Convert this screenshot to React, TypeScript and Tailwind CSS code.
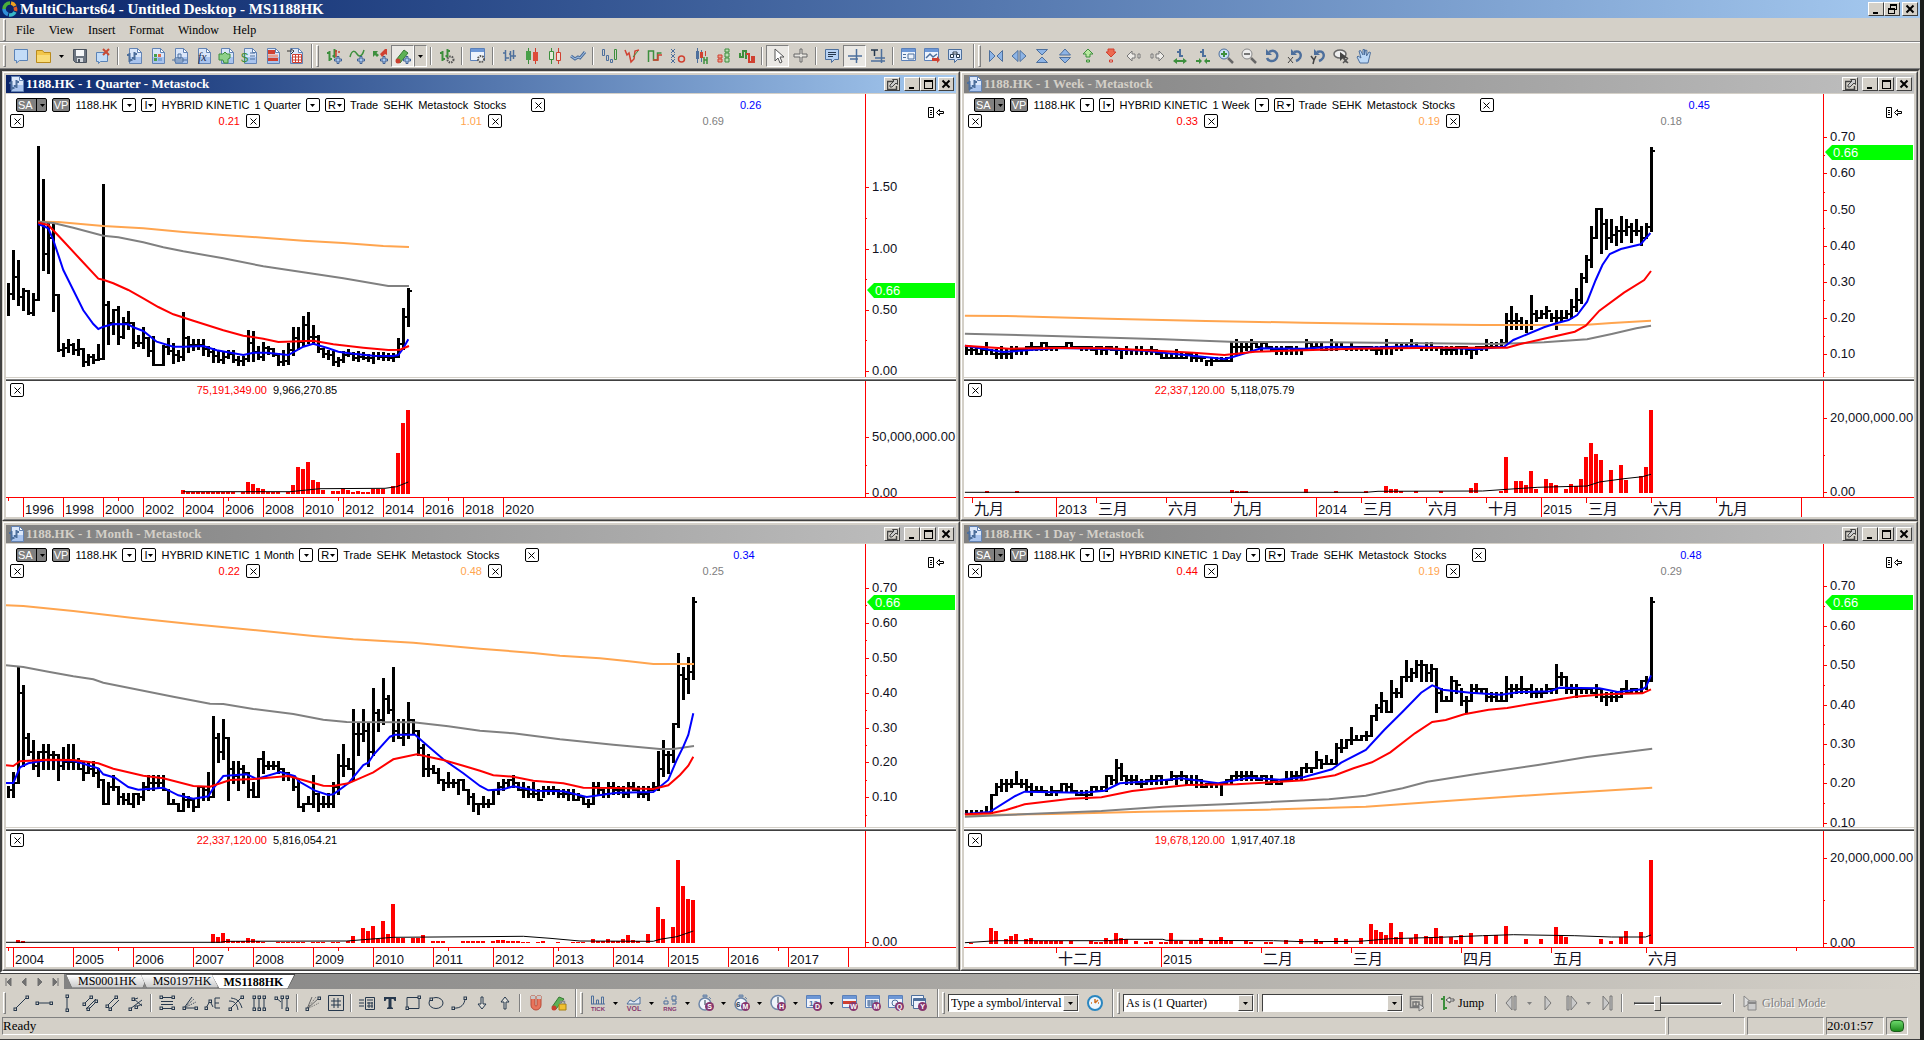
import React from "react";

type Pair = [number, number];
type Bar = [number, number, number];

const B = "#4d6f9c";
const G = "#3d8f3d";
const R = "#d04030";
const D = "#26384d";
const P = "#86366e";

function line(d: string, color: string, width = 1) {
  return <path d={d} fill="none" stroke={color} strokeWidth={width} />;
}

function plus(x = 8, y = 8) {
  return (
    <path
      transform={`translate(${x} ${y})`}
      d="M3 .5h2v2.500h2.500v2H5v2.500H3V5H.5V3H3z"
      fill="#a9c8ee"
      stroke="#3e5f92"
    />
  );
}

function page(extra: React.ReactNode) {
  return (
    <>
      <path d="M3.500.5h8l4 4v11h-12z" fill="#dbe7fa" stroke="#6283b4" />
      <path d="M4 9h11v6H4z" fill="#a9c4ee" />
      <path d="M11.500.5v4h4z" fill="#fff" stroke="#6283b4" />
      {extra}
    </>
  );
}

function badge(letter: string) {
  return (
    <>
      <circle cx="11.500" cy="11.500" r="4.500" fill={P} />
      <text x="11.500" y="14" fontSize="7" fontWeight="bold" textAnchor="middle" fill="#fff">
        {letter}
      </text>
    </>
  );
}

function calendar(extra: React.ReactNode) {
  return (
    <>
      <path d="M.5.5h14v12H.5z" fill="#eef3fc" stroke="#5b80b8" />
      <path d="M1 1h13v3H1z" fill="#6d97d6" />
      {extra}
    </>
  );
}

function watch(extra: React.ReactNode) {
  return (
    <>
      <path d="M5 0h4v2H5zM11 2l2 2" fill="#8aa0bd" stroke="#6d86a8" />
      <circle cx="7" cy="9" r="6" fill="#f2f6fc" stroke="#6d86a8" strokeWidth="1.500" />
      {extra}
    </>
  );
}

function hollow(points: string, color = D) {
  return points.split(" ").map((p) => {
    const [x, y] = p.split(",").map(Number);
    return <rect key={p} x={x - 1} y={y - 1} width="2.500" height="2.500" fill="#d4d0c8" stroke={color} />;
  });
}

const barIcon = "M3.500 3v10M1 5h2M4 11h2M8.500 1v9M6.500 8h2M9 3h2";

const icons: Record<string, React.ReactNode> = {
  "New Workspace": <path d="M1.500 1.500h13v11h-8l-3 2.500v-2.500h-2z" fill="#c3dcf7" stroke="#5a82b6" />,
  "Open": (
    <>
      <path d="M.5 2.500h6l1.500 2h6.500v10H.5z" fill="#f2c64a" stroke="#b98a1c" />
      <path d="M1 7h13v7H1z" fill="#f9dc78" />
    </>
  ),
  "Save": (
    <>
      <path d="M1.500 1.500h13v13h-11l-2-2z" fill="#6c7480" stroke="#4a525e" />
      <path d="M4 2h8v6H4z" fill="#f5f6f8" />
      <path d="M5 10h6v4H5z" fill="#d5d9de" />
      <path d="M6 11h2v3H6z" fill="#4a525e" />
    </>
  ),
  "Close Workspace": (
    <>
      <path d="M1.500 4.500h11v9h-7l-2 2v-2h-2z" fill="#c3dcf7" stroke="#5a82b6" />
      {line("M8 1l6 6M14 1L8 7", "#c94a34", 2)}
    </>
  ),
  "Insert Chart": page(line("M3.500 5v9M1 7h2M4 12h2.500M8.500 4v8M6 10h2M9 6h2", B, 2)),
  "Insert Scanner": page(
    <>
      <path d="M5 6h3v3H5zM5 10h3v3H5z" fill="#4aa04a" />
      <path d="M9 6h3v3H9z" fill="#e06a4a" />
      <path d="M9 10h4v3H9z" fill="#7ea4d8" />
    </>
  ),
  "Insert Bar": page(
    <>
      <path d="M3 10h8v4H3zM6 6h3v4H6z" fill="#c9dcf6" stroke={B} />
      {line("M0 12h15", B)}
    </>
  ),
  "Insert Formula": page(
    <text x="3" y="13" fontSize="12" fontStyle="italic" fill="#1f3050" fontFamily="Liberation Serif">
      fx
    </text>
  ),
  "Insert Signal": page(<path d="M1 6h4l2-2 2 2h3v4l-2 1v4H6l-1-3H1z" fill="#8fd08a" stroke={G} />),
  "Insert Portfolio": page(
    <>
      {line("M9 5h5M9 8h5M9 11h5", B)}
      <text x="0" y="14" fontSize="13" fill={G}>$</text>
    </>
  ),
  "Order Tracker": page(
    <>
      <path d="M4 2h7v4H4zM4 10h10v3H4z" fill={R} />
      <path d="M4 6.500h10v3H4z" fill="#e8a090" />
    </>
  ),
  "Insert Table": page(
    <>
      <path d="M5.500 6.500h9v8h-9z" fill="#fff" stroke={R} />
      {line("M5 9h9M5 12h9M8.500 6v8M11.500 6v8", R)}
      {line("M0 3h5M4 1l3 2-3 3", "#333")}
    </>
  ),
  "Add Instrument": <>{line(barIcon, G, 2)}{line("M10 2v7M12 4h2", R, 1.5)}{plus()}</>,
  "Add Study": <>{line("M1 9C3 1 6 3 8 6s5 3 7-4", G, 1.5)}{plus()}</>,
  "Add Strategy": (
    <>
      <path d="M1 9V3h5L4.500 5 7 7 5 9 3 7z" fill={G} />
      <path d="M8 6l5-5h2v6l-2-1-3 3z" fill={R} />
      {plus()}
    </>
  ),
  "Add Drawing": (
    <>
      <path d="M1 12L9 2l4 3-8 10z" fill="#5db155" stroke="#377a33" />
      <circle cx="3" cy="13" r="2.500" fill="#c9402f" />
      {plus(8, 8)}
    </>
  ),
  "Format Objects": (
    <>
      {line(barIcon, G, 2)}
      <circle cx="11.500" cy="11.500" r="3" fill="#d4d0c8" stroke="#555" strokeWidth="2" strokeDasharray="1.500 1" />
    </>
  ),
  "Format Window": (
    <>
      {calendar(null)}
      <circle cx="11" cy="11" r="3" fill="#eee" stroke="#555" strokeWidth="2" strokeDasharray="1.500 1" />
    </>
  ),
  "Bar": <>{line("M4.500 2v11M2 5h2M5 10h3M9.500 3v10M8 6h2M12.500 2v9M10 8h5", B, 1.5)}</>,
  "Candle": (
    <>
      {line("M4.500 0v16", G)}
      {line("M11.500 0v16", R)}
      <path d="M2 3h5v9H2z" fill="#49a049" />
      <path d="M9 4h5v9H9z" fill="#dd4c38" />
    </>
  ),
  "Hollow Candle": (
    <>
      {line("M4.500 0v16", G)}
      {line("M11.500 0v16", R)}
      <path d="M2.500 3.500h4v8h-4z" fill="#e5ead8" stroke={G} />
      <path d="M9.500 4.500h4v8h-4z" fill="#f0ded8" stroke={R} />
    </>
  ),
  "Line": <>{line("M1 8l4 3 3-2 2 1 5-6", B, 3)}{line("M1 8l4 3 3-2 2 1 5-6", "#aac6ea")}</>,
  "HLC": (
    <>
      <path d="M1.500 1.500h2v6h-2zM5.500 7.500h2v5h-2z" fill="#d4d0c8" stroke={B} />
      <path d="M9.500 11.500h2v3h-2z" fill="#d4d0c8" stroke={B} />
      <path d="M13.500 1.500h2v10h-2z" fill="#d4d0c8" stroke={G} />
    </>
  ),
  "Kagi": <>{line("M1 2l2 5 2-2 2 9 3-3 1-8 4-1", R, 1.5)}{line("M9 9l5-6", G)}</>,
  "Renko": <>{line("M1.500 14V3h5v9h4V5h4", G, 1.5)}{line("M6 12h5V7h4", R, 1.5)}</>,
  "Point and Figure": (
    <>
      {line("M1 1l4 4M5 1L1 5M1 6l4 4M5 6l-4 4M1 11l4 4M5 11l-4 4", B)}
      <circle cx="11.500" cy="11" r="3" fill="none" stroke={R} strokeWidth="1.500" />
    </>
  ),
  "Heikin Ashi": (
    <>
      {line("M4.500 0v15M8.500 2v12", B)}
      <path d="M3 3h3v8H3z" fill={B} />
      <path d="M7 4h3v6H7z" fill={R} />
      {line("M12.500 3v5", R)}
      {line("M11 9v7M14 9v7M11 12h3", G, 1.5)}
    </>
  ),
  "Line Break": (
    <>
      <path d="M2 7h4v3H2zM2 11h4v3H2z" fill="#e8a090" stroke={R} />
      <path d="M9 1h4v3H9zM9 5h4v4H9zM9 10h4v4H9z" fill="#bcdcb4" stroke={G} />
    </>
  ),
  "Volume Profile": <>{line("M1 5v4h3V3h3v8", G, 2)}{line("M7 6h3v8h3V9h2v6", R, 2)}</>,
  "Pointer": <path d="M5 1v12l3-3 2 5 2-1-2-5h4z" fill="#fff" stroke="#555" />,
  "Cross Cursor": <path d="M7 1h2v5h5v3H9v5H7V9H1V6h6z" fill="#e6e4df" stroke="#666" />,
  "Hint Window": <><path d="M1.500 1.500h13v10h-4l-3 3v-3h-6z" fill="#b7d2f4" stroke={B} />{line("M4 4.500h8M4 6.500h8M4 8.500h5", D)}</>,
  "Status Line": <>{line("M9.500 1v14M1 8h14M3 11h8", B, 1.5)}</>,
  "Text Status": (
    <>
      {line("M11.500 1v14M5 10h10M1 13h14", B, 1.5)}
      {line("M1 2h7M4.500 2v6", D, 1.5)}
    </>
  ),
  "Data Window": <>{calendar(line("M2 6.500h3M2 9.500h3M7 6h6v5H7z", B))}</>,
  "Chart Trading": <>{calendar(line("M2 10l4-4 3 3 4-3", B, 1.5))}<path d="M8 10h5v-2l3 4-3 3v-2H8z" fill={R} /></>,
  "Look Inside": <><path d="M1.500 1.500h13v10h-4l-3 3v-3h-6z" fill="#cfe0f7" stroke={B} /><path d="M3.500 6.500h3v3h-3zM9.500 6.500h3v3h-3zM6 4h4v2H6z" fill="#fff" stroke={D} /></>,
  "Compress Width": <><path d="M1.500 2.500v11L7 8z" fill="#8db4e6" stroke={B} /><path d="M14.500 2.500v11L9 8z" fill="#8db4e6" stroke={B} /></>,
  "Expand Width": <><path d="M7 2.500v11L1 8zM9 2.500v11L15 8z" fill="#8db4e6" stroke={B} /></>,
  "Compress Height": <><path d="M2.500 1.500h11L8 7zM2.500 14.500h11L8 9z" fill="#8db4e6" stroke={B} /></>,
  "Expand Height": <><path d="M2.500 7h11L8 1zM2.500 9.500h11L8 15z" fill="#8db4e6" stroke={B} /></>,
  "Shift Up": <><path d="M8 1l5 5h-3v3H6V6H3z" fill="#b9e8a0" stroke={G} /><path d="M6.500 12h3v2h-3z" fill="#b9e8a0" stroke={G} /></>,
  "Shift Down": <><path d="M8 9L3 4h2V1h6v3h2z" fill="#ec6a50" stroke={R} /><path d="M6.500 12h3v2h-3z" fill="#ecc" stroke={R} /></>,
  "Shift Left": <><path d="M1 8l5-5v3h3v4H6v3zM12 6h2v4h-2z" fill="#eeece8" stroke="#777" /></>,
  "Shift Right": <><path d="M15 8l-5-5v3H7v4h3v3zM2 6h2v4H2z" fill="#eeece8" stroke="#777" /></>,
  "More Bars": <>{line("M8 1v8M5 4h3M8 8h3", B, 2)}<path d="M1 13l4-3v2h6v-2l4 3-4 3v-2H5v2z" fill={G} /></>,
  "Fewer Bars": <>{line("M8 1v8M5 4h3M8 8h3", B, 2)}<path d="M7 13l-3-3v2H1v2h3v2zM9 13l3-3v2h3v2h-3v2z" fill={G} /></>,
  "Zoom In": <><circle cx="6" cy="6" r="5" fill="#c9dff7" stroke={B} />{line("M3 6h6M6 3v6", G, 2)}{line("M10 10l5 5", "#666", 2.5)}</>,
  "Zoom Out": <><circle cx="6" cy="6" r="5" fill="#eee" stroke="#888" />{line("M3 6h6", "#777", 2)}{line("M10 10l5 5", "#666", 2.5)}</>,
  "Undo Zoom": <>{line("M5 4c7-4 11 4 6 8-3 2-7 1-8-2", B, 2.5)}<path d="M2 1v6h6z" fill={B} /></>,
  "Reset X": <>{line("M7 4c7-3 10 6 2 9", B, 2.5)}<path d="M4 1v6h6z" fill={B} />{line("M1 9l5 6M6 9l-5 6", "#444")}</>,
  "Reset Y": <>{line("M7 4c7-3 10 6 2 9", B, 2.5)}<path d="M4 1v6h6z" fill={B} />{line("M1 8l3 4 2-4M4 12l-1 4", "#444", 1.5)}</>,
  "Cancel Zoom": <><ellipse cx="7" cy="6" rx="6" ry="4" fill="#eee" stroke="#666" strokeWidth="1.500" /><path d="M7 4v9l3-3 3 5 1-1-2-4h3z" fill="#444" />{line("M10 10l5 5M15 10l-5 5", "#555", 1.5)}</>,
  "Hand": <path d="M4 15L1 9l1-1 3 2L3 3l1.500-.5L7 7V1.500h1.500V7l1-5L11 2.500 10.500 8 13 4l1.500.5L12 15z" fill="#bcd8f6" stroke={B} />,
  "Trend Line": <>{line("M2 14L14 2", D)}{hollow("2,14 14,2")}</>,
  "Horizontal Line": <>{line("M1 8h14", D)}{hollow("1,8 15,8")}</>,
  "Vertical Line": <>{line("M8 1v14", D)}{hollow("8,1 8,15")}</>,
  "Regression": <>{line("M1 10l8-8M4 14L14 4M6 15l9-9", D)}{hollow("2,9 9,2 6,14 14,6")}</>,
  "Equidistant": <>{line("M2 11L11 2M5 14l9-9", D)}{hollow("2,11 11,2 5,14")}</>,
  "Pitchfork": <>{line("M2 14L14 5M5 3l9 8M4 5l6-2M8 12l6-3", D)}{hollow("5,4 8,12 2,14")}</>,
  "Fibonacci Levels": <>{line("M2 2.500h12M2 6.500h12M2 9.500h12M2 13.500h12", D)}{hollow("2,2 14,2 2,13 14,13")}</>,
  "Speed Lines": <>{line("M2 13h12M2 13L10 2", D)}<path d="M2 13l12-6M2 13l10-9" fill="none" stroke={D} strokeDasharray="1 1" />{hollow("2,13 14,13")}</>,
  "Elliott": <>{line("M1 13l4-7 3 6M10 3h5M10 3v10h5M10 8h4", D)}{hollow("5,6 1,13")}</>,
  "Arcs": <>{line("M2 14L14 2M1 6c6 0 8 3 9 9M3 3c7 1 9 4 11 10", D)}{hollow("2,14 14,2")}</>,
  "Time Zones": <>{line("M3 2v12M8 2v12M13 2v12", D)}{hollow("3,2 3,14 8,2 8,14 13,2 13,14")}</>,
  "Trend Time": <>{line("M1 2l6 5M8 2v12M13 2v12", D)}{hollow("2,3 8,2 13,2 13,14")}</>,
  "Gann Fan": <>{line("M2 14L14 3M2 14L7 2", "#666")}<path d="M2 14L11 2M2 14l12-6" fill="none" stroke="#666" strokeDasharray="1 1" />{hollow("2,14 14,3")}</>,
  "Gann Square": <>{line("M.5.500h15v15h-15zM6 3v10M10 3v10M3 6h10M3 10h10", D)}</>,
  "Label": <>{line("M6.500 2.500h9v12h-9zM8 5h6M8 8h6M8 11h6M10 7v6M13 7v6M0 5h5M0 8h5M0 11h5", D)}</>,
  "Text": <path d="M2 2h12v4h-1.500l-1-2H9.500v8l1.500 1v1H5v-1l1.500-1V4h-2l-1 2H2z" fill={D} />,
  "Rectangle": <>{line("M2 2.500h12v11H2z", D)}{hollow("14,2 2,13")}</>,
  "Ellipse": <><ellipse cx="8" cy="8" rx="7" ry="5.500" fill="none" stroke={D} />{hollow("3,4")}</>,
  "Arc": <>{line("M2 13c8 1 12-4 12-10", D)}{hollow("2,13 14,3")}</>,
  "Arrow Down": <path d="M7 2h2v7h3l-4 5-4-5h3z" fill="#e2e0da" stroke={D} />,
  "Arrow Up": <path d="M7 14h2V7h3L8 2 4 7h3z" fill="#e2e0da" stroke={D} />,
  "Magnet": <><path d="M3 1v9a5 5 0 0010 0V1H9v9a1 1 0 01-2 0V1z" fill="#e8745c" stroke="#b84a36" /><path d="M3 1h4v3H3zM9 1h4v3H9z" fill="#c8c8c8" /></>,
  "Lock Drawings": (
    <>
      <path d="M1 12L8 2l5 2-8 10z" fill="#5db155" stroke="#377a33" />
      <circle cx="3" cy="13" r="2.500" fill="#c9402f" />
      <path d="M8 9h7v6H8z" fill="#f0c030" stroke="#a88010" />
      {line("M9.500 9V6.500h4V9", "#8a8a8a", 1.5)}
    </>
  ),
  "Tick": <>{line("M1.500 9V1h2v8M6.500 9V5h2v4M11.500 9V2h2v7M1 9h14", B)}<text x="8" y="16" fontSize="6" fontWeight="bold" textAnchor="middle" fill={P}>TICK</text></>,
  "Volume": <><path d="M1 9l3-4 4 2 6-5v7z" fill="#dfe8f4" stroke={B} /><text x="8" y="16" fontSize="7" fontWeight="bold" textAnchor="middle" fill={P}>VOL</text></>,
  "Range": <>{line("M2 6h4v3H2zM3 3h2M10 1h4v4h-4zM10 6h4v3h-4", B)}<text x="8" y="16" fontSize="6" fontWeight="bold" textAnchor="middle" fill={P}>RNG</text></>,
  "Seconds": <>{watch(line("M7 5v5", D))}{badge("S")}</>,
  "Minutes": <>{watch(<text x="2" y="12" fontSize="8" fontWeight="bold" fill={D}>6</text>)}{badge("M")}</>,
  "Hours": <><circle cx="8" cy="7.500" r="7" fill="#eef3fa" stroke="#6d86a8" strokeWidth="1.500" />{line("M8 2v6", D)}{badge("H")}</>,
  "Days": <>{calendar(<text x="3" y="11" fontSize="8" fontWeight="bold" fill={B}>12</text>)}{badge("D")}</>,
  "Weeks": <>{calendar(<path d="M1 6h13v3H1z" fill={R} />)}{badge("W")}</>,
  "Months": <>{calendar(line("M2 6h11M2 8h11M2 10h11M4 5v7M7 5v7M10 5v7", B))}{badge("M")}</>,
  "Quarters": <>{calendar(<circle cx="7" cy="8" r="3" fill="none" stroke={B} />)}{badge("Q")}</>,
  "Years": <><path d="M.5.5h12v10H.5z" fill="#eef3fc" stroke={B} /><path d="M2.500 3.500h12v10h-12z" fill="#eef3fc" stroke={B} />{line("M3 5h11", B, 2)}{badge("Y")}</>,
  "Go": <><circle cx="8" cy="8" r="7" fill="#eef6fc" stroke="#2a86c0" strokeWidth="2" />{line("M8 4v4M8 8l3-3M4 8h1M11 8h1", "#d07020", 1.5)}</>,
  "Playback Settings": <>{line("M1.500 1.500h12v11h-12zM1 4h12M4 7h6v4H4zM7 6v5", "#777", 1.5)}<path d="M10 9l5 3.500-5 3.500z" fill="#ddd" stroke="#777" /></>,
  "Jump": <>{line("M4 1v14M1 4h3M4 13h3", G, 2)}<path d="M6 5l4-3v2h4v2h-4v2z" fill="#eee" stroke="#555" /></>,
  "Step Back": <path d="M8 1v14L2 8zM10 1h2v14h-2z" fill="#c9c9c9" stroke="#777" />,
  "Play": <path d="M5 1v14l6-7z" fill="#c9c9c9" stroke="#777" />,
  "Step Forward": <path d="M4 1h2v14H4zM8 1v14l6-7z" fill="#c9c9c9" stroke="#777" />,
  "To End": <path d="M4 1v14l6-7zM11 1h2v14h-2z" fill="#c9c9c9" stroke="#777" />,
  "Global Mode": <><path d="M2 1v11l3-2 5-2z" fill="#ddd" stroke="#888" /><path d="M6 6h8v9H6z" fill="#ccc" stroke="#888" />{line("M6 8h8", "#888", 2)}</>,
};

function Icon({ name }: { name: string }) {
  return (
    <svg viewBox="0 0 16 16" className="h-4 w-4 shrink-0 overflow-visible" fontFamily="Liberation Sans">
      {icons[name]}
    </svg>
  );
}

function Arrow({ dim }: { dim?: boolean }) {
  return (
    <svg viewBox="0 0 5 3" className="h-[3px] w-[5px] shrink-0">
      <path d="M0 0h5L2.500 3z" fill={dim ? "#808080" : "#000"} />
    </svg>
  );
}

function Separator() {
  return <div className="mx-[3px] h-[18px] w-0.5 shrink-0 border-l border-r border-l-[#808080] border-r-white" />;
}

function Grip() {
  return <div className="mx-[3px] h-[22px] w-[3px] shrink-0 border border-t-white border-l-white border-r-[#808080] border-b-[#808080]" />;
}

function BandEnd() {
  return <div className="h-full w-0.5 shrink-0 border-l border-r border-l-[#808080] border-r-white" />;
}

const pressed = ["Add Drawing", "Pointer", "Status Line"];

// "|" is a separator, "v" a drop arrow, "V" a pressed one, "d" a disabled one
function Tools({ items }: { items: string[] }) {
  return (
    <>
      {items.map((item, i) => {
        if (item === "|") return <Separator key={i} />;
        if (item === "v" || item === "d")
          return (
            <button key={i} aria-label="More options" className="flex h-5 w-[13px] shrink-0 items-center justify-center">
              <Arrow dim={item === "d"} />
            </button>
          );
        if (item === "V")
          return (
            <button
              key={i}
              aria-label="More options"
              className="flex h-[22px] w-[13px] shrink-0 items-center justify-center border border-t-[#808080] border-l-[#808080] border-r-white border-b-white"
            >
              <Arrow />
            </button>
          );
        return (
          <button
            key={i}
            aria-label={item}
            className={
              pressed.includes(item)
                ? "flex h-[22px] w-[23px] shrink-0 items-center justify-center border border-t-[#808080] border-l-[#808080] border-r-white border-b-white bg-[#eae8e4]"
                : "flex h-[22px] w-[23px] shrink-0 items-center justify-center"
            }
          >
            <Icon name={item} />
          </button>
        );
      })}
    </>
  );
}

function FrameButton({ kind }: { kind: "min" | "max" | "restore" | "close" | "detach" }) {
  const shapes = {
    min: <path d="M2 8h5v2H2z" />,
    max: <path d="M1 1h9v9H1zM2 3v6h7V3z" fillRule="evenodd" />,
    restore: <path d="M3 0h7v6H8v4H1V4h2zM4 2v2h4v1h1V2zM2 6v3h5V6z" fillRule="evenodd" />,
    close: <path d="M1.500 1.500l7 7M8.500 1.500l-7 7" stroke="#000" strokeWidth="2" />,
    detach: (
      <>
        <path d="M6 2.500H.5v8h9V7" fill="none" stroke="#444" strokeWidth="1.500" />
        <path d="M3 8V6l4-4-1.500-1.500h5v5L9 4 5 8z" fill="#ccc" stroke="#444" />
      </>
    ),
  };
  return (
    <button
      aria-label={kind}
      className="flex h-3.5 w-4 items-center justify-center border border-t-white border-l-white border-r-[#404040] border-b-[#404040] bg-[#d4d0c8]"
    >
      <svg viewBox="0 0 11 11" className="h-[11px] w-[11px]">
        {shapes[kind]}
      </svg>
    </button>
  );
}

function BoxButton({ label, arrow, cross, dark }: { label?: string; arrow?: boolean; cross?: boolean; dark?: boolean }) {
  return (
    <button
      aria-label={label || (cross ? "Remove" : "Choose")}
      className={
        dark
          ? "flex h-3.5 shrink-0 items-center gap-[3px] rounded-xs border border-black bg-[#808080] px-px text-white"
          : "flex h-3.5 min-w-3.5 shrink-0 items-center justify-center gap-px rounded-xs border border-black bg-white px-0.5"
      }
    >
      {label}
      {dark && arrow && <span className="h-3 w-px bg-black" />}
      {arrow && <Arrow />}
      {cross && (
        <svg viewBox="0 0 7 7" className="h-[7px] w-[7px]">
          <path d="M.5.5l6 6M6.500.5l-6 6" stroke="#000" />
        </svg>
      )}
    </button>
  );
}

interface ChartData {
  period: string;
  active?: boolean;
  values: string[];
  volumeValues: string[];
  // series coordinates -> pane pixels
  px: (x: number) => number;
  py: (y: number) => number;
  vy: (y: number) => number;
  // price of a bar -> pane pixels
  price: (v: number) => number;
  bars: Bar[];
  orange: Pair[];
  gray: Pair[];
  red: Pair[];
  blue: Pair[];
  volume: Pair[];
  volumeBase: number;
  average: Pair[];
  priceTicks: [number, string][];
  marker: number;
  volumeTicks: [number, string][];
  minor: number[];
  volumeMinor: number[];
  dates: [number, string][];
  dateTicks: number[];
}

function Series({ points, color, px, py, width = 2 }: { points: Pair[]; color: string; px: (n: number) => number; py: (n: number) => number; width?: number }) {
  return (
    <polyline
      points={points.map(([x, y]) => `${px(x).toFixed(1)},${py(y).toFixed(1)}`).join(" ")}
      fill="none"
      stroke={color}
      strokeWidth={width}
    />
  );
}

function Axis({ ticks, minor, height, marker }: { ticks: [number, string][]; minor: number[]; height: number; marker?: number }) {
  return (
    <svg width="91" height={height} className="shrink-0 overflow-visible border-l border-[#f00]" fontSize="13">
      {ticks.map(([y, text]) => (
        <g key={text}>
          <path d={`M0 ${y}h3`} stroke="#f00" shapeRendering="crispEdges" />
          <text x="6" y={y + 4} fill="#101020">
            {text}
          </text>
        </g>
      ))}
      {minor.map((y) => (
        <path key={y} d={`M0 ${y}h1`} stroke="#f00" shapeRendering="crispEdges" />
      ))}
      {marker !== undefined && (
        <>
          <path d={`M1 ${marker}l7-7h81v15H8z`} fill="#0f0" />
          <text x="9" y={marker + 5} fill="#fff">
            0.66
          </text>
          <path d="M62.500 13.500h5v10h-5zM64 16.500h2M64 18.500h2M64 20.500h2M70.500 18.500l3-3v2h4v2h-4v2z" fill="none" stroke="#000" />
        </>
      )}
    </svg>
  );
}

function ChartWindow({ data }: { data: ChartData }) {
  return (
    <section className="min-w-0 border border-t-[#d4d0c8] border-l-[#d4d0c8] border-r-[#404040] border-b-[#404040]">
      <div className="border border-t-white border-l-white border-r-[#808080] border-b-[#808080] bg-[#d4d0c8] p-0.5">
        <header
          className={
            data.active
              ? "mb-px flex h-[18px] items-center bg-gradient-to-r from-[#0a246a] to-[#a6caf0] px-0.5 text-white"
              : "mb-px flex h-[18px] items-center bg-gradient-to-r from-[#808080] to-[#c0c0c0] px-0.5 text-[#d4d0c8]"
          }
        >
          <Icon name="Insert Chart" />
          <h2 className="ml-0.5 flex-1 truncate font-['Liberation_Serif','Noto_Sans_CJK_TC',serif] text-[13px] leading-4 font-bold">
            1188.HK - 1 {data.period} - Metastock
          </h2>
          <FrameButton kind="detach" />
          <div className="ml-1 flex">
            <FrameButton kind="min" />
            <FrameButton kind="max" />
          </div>
          <div className="ml-0.5">
            <FrameButton kind="close" />
          </div>
        </header>

        <div className="relative flex h-[283px] bg-white">
          <div className="relative min-w-0 flex-1">
            <svg className="h-full w-full">
              <path
                fill="#000"
                shapeRendering="crispEdges"
                d={data.bars
                  .map(([high, low, close], i) => {
                    const x = 1 + i * 5;
                    const top = Math.round(data.price(high)) - 1;
                    const bottom = Math.round(data.price(low)) + 1;
                    const tick = Math.round(data.price(close)) - 1;
                    const reach = i === data.bars.length - 1 ? 4 : 5;
                    return `M${x} ${top}h3V${bottom}h-3zM${x + 1} ${tick}h${reach}v2h-${reach}z`;
                  })
                  .join("")}
              />
              <Series points={data.orange} color="#ffa54f" px={data.px} py={data.py} />
              <Series points={data.gray} color="#808080" px={data.px} py={data.py} />
              <Series points={data.blue} color="#00f" px={data.px} py={data.py} />
              <Series points={data.red} color="#f00" px={data.px} py={data.py} />
            </svg>
            <div className="absolute inset-x-0 top-1 overflow-hidden text-[11px] leading-[14px] whitespace-nowrap">
              <div className="flex items-center gap-[5px] pl-2.5">
                <BoxButton label="SA" arrow dark />
                <BoxButton label="VP" dark />
                <span>1188.HK</span>
                <BoxButton arrow />
                <BoxButton label="I" arrow />
                <span>HYBRID KINETIC</span>
                <span>1 {data.period}</span>
                <BoxButton arrow />
                <BoxButton label="R" arrow />
                <span>Trade</span>
                <span>SEHK</span>
                <span>Metastock</span>
                <span className="mr-5">Stocks</span>
                <BoxButton cross />
                <span className="w-[211px] text-right text-[#00f]">{data.values[0]}</span>
              </div>
              <div className="mt-0.5 flex items-center gap-1.5 pl-1">
                <BoxButton cross />
                <span className="w-[210px] text-right text-[#f00]">{data.values[1]}</span>
                <BoxButton cross />
                <span className="w-[216px] text-right text-[#ffa54f]">{data.values[2]}</span>
                <BoxButton cross />
                <span className="w-[216px] text-right text-[#808080]">{data.values[3]}</span>
              </div>
            </div>
          </div>
          <Axis ticks={data.priceTicks} minor={data.minor} height={283} marker={data.marker} />
        </div>

        <div className="relative h-1 border-t border-b border-t-[#d4d0c8] border-b-[#404040] bg-white">
          <div className="mt-px h-px bg-[#808080]" />
        </div>

        <div className="flex h-[116px] bg-white">
          <div className="relative min-w-0 flex-1">
            <svg className="h-full w-full">
              <path
                fill="#f00"
                shapeRendering="crispEdges"
                d={data.volume
                  .map(([x, top]) => `M${Math.round(data.px(x)) - 2} ${Math.round(data.vy(top))}h4V${Math.round(data.vy(data.volumeBase))}h-4z`)
                  .join("")}
              />
              <Series points={data.average} color="#000" px={data.px} py={data.vy} width={1} />
            </svg>
            <div className="absolute inset-x-0 top-0.5 flex items-center gap-1.5 pl-1 text-[11px] leading-[14px] whitespace-nowrap">
              <BoxButton cross />
              <span className="w-[237px] text-right text-[#f00]">{data.volumeValues[0]}</span>
              <span>{data.volumeValues[1]}</span>
            </div>
          </div>
          <Axis ticks={data.volumeTicks} minor={data.volumeMinor} height={116} />
        </div>

        <svg className="block h-5 w-full border-t border-[#f00] bg-white" fontSize="13">
          {data.dates.map(([x, text], i) => {
            const long = !text || text.length === 4;
            const at = Math.floor(data.px(x));
            return (
              <g key={i}>
                <path d={`M${at}.5 0v${long ? 19 : 5}`} stroke="#f00" shapeRendering="crispEdges" />
                <text x={at + 2} y="16" fontSize={long ? 13 : 15} fill="#101020">
                  {text}
                </text>
              </g>
            );
          })}
          {data.dateTicks.map((x) => (
            <path key={x} d={`M${Math.floor(data.px(x))}.5 0v3`} stroke="#f00" shapeRendering="crispEdges" />
          ))}
        </svg>
      </div>
    </section>
  );
}

const leftX = (x: number) => x / 3 - 6;
const rightX = (x: number) => x / 1.6266 - 4;

// same level repeated over a run of columns
const run = (from: number, to: number, step: number, top: number): Pair[] => {
  const out: Pair[] = [];
  for (let x = from; x <= to; x += step) out.push([x, top]);
  return out;
};

const quarter: ChartData = {
  period: "Quarter",
  active: true,
  values: ["0.26", "0.21", "1.01", "0.69"],
  volumeValues: ["75,191,349.00", "9,966,270.85"],
  px: leftX,
  py: (y) => y / 3 + 36,
  vy: (y) => y / 3 - 251,
  price: (v) => v / 3 + 36,
  bars: [
    [462, 556, 493], [362, 506, 441], [392, 526, 500], [477, 539, 483], [482, 551, 548], [492, 556, 511], [52, 510, 278],
    [149, 419, 371], [282, 428, 325], [285, 542, 495], [494, 663, 661], [642, 678, 655], [629, 666, 645], [642, 672, 660],
    [629, 674, 658], [657, 708, 697], [674, 705, 680], [674, 698, 690], [644, 690, 688], [164, 686, 525], [516, 641, 578],
    [540, 611, 541], [530, 641, 620], [564, 623, 580], [545, 596, 578], [578, 654, 640], [617, 648, 640], [594, 653, 625],
    [624, 678, 663], [622, 705, 704], [704, 705, 704], [647, 705, 652], [627, 672, 664], [642, 698, 674], [662, 692, 680],
    [548, 690, 625], [620, 666, 645], [629, 660, 645], [629, 656, 645], [630, 674, 658], [650, 678, 665], [657, 695, 678],
    [664, 695, 690], [667, 698, 680], [662, 683, 672], [662, 695, 690], [682, 705, 692], [682, 705, 688], [602, 692, 640],
    [605, 693, 665], [650, 688, 680], [638, 690, 655], [650, 673, 658], [657, 678, 675], [672, 705, 695], [662, 705, 693],
    [642, 701, 660], [594, 676, 625], [594, 658, 635], [560, 648, 585], [548, 638, 620], [587, 638, 620], [617, 666, 658],
    [657, 681, 672], [662, 688, 675], [667, 705, 697], [685, 708, 690], [667, 695, 675], [660, 678, 672], [670, 690, 684],
    [667, 693, 680], [670, 688, 684], [674, 692, 685], [670, 698, 677], [670, 688, 680], [670, 690, 682], [672, 690, 684],
    [672, 692, 680], [626, 681, 643], [536, 658, 560], [477, 588, 482],
  ],
  orange: [[115, 275], [175, 276], [310, 288], [430, 295], [550, 306], [670, 315], [790, 323], [910, 332], [1030, 339], [1150, 348], [1227, 351]],
  gray: [[115, 275], [160, 279], [220, 293], [310, 317], [355, 322], [430, 337], [490, 352], [550, 364], [670, 385], [790, 409], [910, 427], [1030, 445], [1165, 468], [1227, 468]],
  red: [[115, 278], [145, 285], [190, 333], [240, 387], [295, 446], [310, 449], [340, 460], [385, 480], [430, 505], [475, 531], [520, 553], [580, 572], [670, 601], [730, 617], [790, 626], [835, 636], [940, 632], [1000, 643], [1090, 653], [1165, 660], [1200, 659], [1227, 648]],
  blue: [[115, 282], [130, 288], [145, 295], [160, 330], [190, 420], [250, 541], [280, 582], [295, 597], [310, 590], [340, 582], [385, 583], [400, 592], [430, 603], [470, 635], [520, 650], [550, 650], [610, 648], [650, 661], [730, 675], [760, 668], [800, 668], [865, 675], [910, 650], [940, 641], [985, 655], [1015, 665], [1060, 671], [1120, 677], [1180, 678], [1195, 675], [1210, 655], [1225, 628]],
  volume: [
    [550, 1080], ...run(565, 700, 15, 1086), [730, 1086], [745, 1056], [760, 1062], [775, 1074], [790, 1077], ...run(805, 835, 15, 1086),
    [865, 1086], [880, 1065], [895, 1011], [910, 1017], [925, 996], [940, 1050], [955, 1056], [970, 1080], [1000, 1083], [1015, 1083],
    [1030, 1077], [1045, 1080], [1060, 1086], [1075, 1083], [1090, 1086], [1105, 1086], ...run(1120, 1150, 15, 1077), [1180, 1068],
    [1195, 969], [1210, 879], [1225, 840],
  ],
  volumeBase: 1092,
  average: [[550, 1085], [870, 1085], [920, 1080], [960, 1076], [1155, 1075], [1190, 1070], [1225, 1056]],
  priceTicks: [[93, "1.50"], [155, "1.00"], [216, "0.50"], [277, "0.00"]],
  minor: [124, 185, 246],
  marker: 196,
  volumeTicks: [[56, "50,000,000.00"], [112, "0.00"]],
  volumeMinor: [84],
  dates: ["1996", "1998", "2000", "2002", "2004", "2006", "2008", "2010", "2012", "2014", "2016", "2018", "2020"].map((t, i) => [70 + i * 120, t]),
  dateTicks: [25, 355, 685, 1015, 1345],
};

const month: ChartData = {
  period: "Month",
  values: ["0.34", "0.22", "0.48", "0.25"],
  volumeValues: ["22,337,120.00", "5,816,054.21"],
  px: leftX,
  py: (y) => y / 3 - 24,
  vy: (y) => y / 3 - 311,
  price: (v) => 253 - 3.483 * (v - 10),
  bars: [
    [13, 10, 12], [17, 10, 14], [47, 14, 40], [42, 19, 27], [28, 22, 23], [26, 18, 19], [23, 16, 23], [25, 18, 23], [25, 18, 22], [23, 18, 22],
    [22, 15, 19], [24, 18, 20], [25, 18, 20], [25, 18, 20], [21, 18, 18], [20, 15, 17], [20, 17, 18], [20, 16, 17], [18, 13, 15], [15, 8, 8],
    [14, 8, 13], [16, 12, 13], [13, 8, 10], [11, 8, 9], [11, 8, 8], [11, 7, 11], [11, 8, 10], [14, 9, 13], [16, 12, 14], [16, 12, 14],
    [16, 13, 14], [16, 12, 12], [12, 8, 8], [9, 8, 8], [8, 6, 6], [11, 6, 9], [10, 7, 9], [9, 6, 7], [13, 7, 13], [13, 9, 12],
    [17, 9, 10], [33, 10, 27], [28, 20, 23], [32, 21, 27], [27, 9, 18], [20, 14, 16], [20, 12, 18], [19, 14, 17], [17, 10, 12], [14, 10, 10],
    [21, 10, 21], [23, 17, 19], [20, 18, 19], [20, 18, 19], [20, 17, 18], [18, 15, 17], [17, 15, 16], [16, 12, 13], [15, 7, 7], [8, 6, 8],
    [10, 8, 8], [16, 7, 11], [11, 6, 8], [10, 7, 8], [11, 7, 8], [14, 7, 13], [22, 11, 19], [25, 16, 19], [21, 18, 18], [35, 15, 28],
    [31, 22, 28], [35, 26, 29], [31, 19, 23], [41, 22, 34], [35, 29, 32], [44, 31, 38], [39, 34, 35], [47, 26, 29], [32, 27, 27], [32, 25, 28],
    [37, 27, 32], [32, 28, 29], [29, 22, 24], [25, 16, 18], [22, 16, 18], [19, 17, 17], [18, 14, 15], [15, 12, 14], [17, 13, 14], [15, 13, 14],
    [15, 11, 15], [15, 12, 12], [12, 8, 10], [11, 6, 8], [8, 5, 8], [10, 7, 8], [9, 7, 8], [12, 8, 12], [14, 11, 13], [15, 12, 14],
    [15, 13, 15], [16, 13, 14], [14, 12, 12], [14, 10, 12], [13, 10, 11], [14, 10, 11], [12, 9, 9], [13, 10, 12], [13, 11, 12], [13, 11, 12],
    [12, 10, 11], [12, 10, 11], [12, 9, 11], [12, 9, 9], [11, 9, 10], [10, 8, 8], [9, 7, 8], [14, 8, 13], [14, 11, 12], [12, 10, 11],
    [14, 10, 13], [14, 11, 12], [13, 11, 12], [13, 10, 11], [14, 10, 13], [14, 12, 12], [13, 10, 11], [13, 10, 11], [13, 9, 12], [14, 12, 13],
    [23, 12, 18], [26, 16, 22], [23, 17, 22], [31, 20, 31], [51, 30, 45], [47, 38, 44], [50, 40, 46], [67, 44, 66],
  ],
  orange: [[18, 256], [70, 258], [220, 273], [400, 294], [580, 313], [760, 330], [940, 348], [1060, 358], [1240, 368], [1440, 386], [1480, 389], [1600, 399], [1680, 407], [1800, 415], [1880, 423], [1960, 432], [2082, 432]],
  gray: [[18, 436], [70, 441], [145, 455], [220, 469], [280, 478], [310, 488], [400, 506], [520, 530], [630, 551], [670, 552], [760, 567], [880, 582], [970, 599], [1040, 606], [1240, 607], [1345, 619], [1440, 632], [1540, 640], [1680, 658], [1840, 674], [1980, 687], [2020, 687], [2082, 678]],
  red: [[18, 736], [40, 738], [60, 724], [140, 719], [220, 720], [295, 730], [340, 746], [430, 767], [490, 775], [580, 798], [630, 800], [690, 780], [760, 777], [865, 768], [895, 776], [970, 797], [1000, 798], [1045, 790], [1120, 757], [1180, 718], [1250, 703], [1330, 720], [1390, 737], [1440, 752], [1480, 766], [1540, 770], [1600, 782], [1690, 790], [1750, 803], [1850, 804], [1960, 807], [2005, 796], [2040, 765], [2065, 737], [2080, 710]],
  blue: [[18, 789], [40, 789], [60, 742], [85, 730], [140, 720], [220, 722], [295, 745], [310, 763], [345, 773], [385, 801], [415, 809], [490, 803], [535, 826], [580, 836], [625, 829], [640, 805], [670, 768], [740, 763], [770, 777], [840, 756], [885, 768], [895, 783], [945, 812], [985, 825], [1000, 823], [1045, 790], [1090, 735], [1105, 728], [1120, 705], [1170, 650], [1185, 644], [1245, 644], [1280, 675], [1330, 718], [1390, 760], [1440, 798], [1465, 811], [1510, 808], [1540, 799], [1610, 812], [1690, 814], [1760, 831], [1850, 818], [1960, 816], [1980, 800], [2005, 780], [2030, 720], [2050, 680], [2065, 645], [2080, 580]],
  volume: [
    [55, 1260], [70, 1263], [640, 1242], [655, 1251], [670, 1239], [685, 1257], ...run(700, 730, 15, 1263), [745, 1254], [760, 1257],
    [775, 1263], [790, 1265], ...run(835, 910, 15, 1265), ...run(940, 970, 15, 1265), [1000, 1265], [1015, 1265], [1045, 1263], [1060, 1248],
    [1090, 1224], [1105, 1233], [1120, 1218], [1135, 1257], [1150, 1203], [1165, 1242], [1180, 1152], [1195, 1253], [1210, 1253],
    [1240, 1253], [1255, 1253], [1270, 1245], ...run(1300, 1330, 15, 1263), ...run(1390, 1450, 15, 1264), [1480, 1263], [1495, 1260],
    [1510, 1260], ...run(1525, 1555, 15, 1263), [1570, 1266], [1585, 1266], [1615, 1266], [1630, 1263], [1675, 1266],
    ...run(1720, 1750, 15, 1266), [1780, 1257], [1795, 1263], [1810, 1263], [1825, 1257], [1840, 1263], [1855, 1263], [1870, 1257],
    [1885, 1245], [1900, 1260], [1915, 1264], [1945, 1242], [1975, 1161], [1990, 1197], [2020, 1221], [2035, 1020], [2050, 1098],
    [2065, 1137], [2080, 1140],
  ],
  volumeBase: 1269,
  average: [[18, 1267], [660, 1267], [680, 1264], [1040, 1263], [1180, 1252], [1440, 1250], [1570, 1249], [1650, 1255], [1740, 1263], [1960, 1264], [1980, 1258], [2030, 1250], [2060, 1240], [2080, 1233]],
  priceTicks: [[44, "0.70"], [79, "0.60"], [114, "0.50"], [149, "0.40"], [184, "0.30"], [218, "0.20"], [253, "0.10"]],
  minor: [61, 96, 131, 166, 201, 236, 271],
  marker: 58,
  volumeTicks: [[111, "0.00"]],
  volumeMinor: [],
  dates: [
    [40, "2004"], [220, "2005"], [400, "2006"], [580, "2007"], [760, "2008"], [940, "2009"], [1120, "2010"], [1300, "2011"],
    [1480, "2012"], [1660, "2013"], [1840, "2014"], [2005, "2015"], [2185, "2016"], [2365, "2017"], [2545, ""],
  ],
  dateTicks: [25, 355, 685, 1015, 1345, 1675, 2335],
};

const week: ChartData = {
  period: "Week",
  values: ["0.45", "0.33", "0.19", "0.18"],
  volumeValues: ["22,337,120.00", "5,118,075.79"],
  px: rightX,
  py: (y) => y / 3 + 186,
  vy: (y) => y / 3 - 101,
  price: (v) => 260 - 3.617 * (v - 10),
  bars: [
    [12, 10, 11], [12, 10, 11], [12, 10, 10], [12, 10, 11], [13, 10, 11], [11, 10, 10], [11, 9, 10], [12, 9, 10], [11, 9, 10], [12, 9, 11],
    [12, 10, 11], [11, 10, 11], [12, 10, 12], [13, 11, 12], [12, 11, 12], [13, 11, 13], [13, 11, 12], [12, 11, 12], [12, 11, 12], [12, 12, 12],
    [13, 12, 13], [13, 12, 12], [12, 12, 12], [12, 11, 12], [12, 11, 12], [12, 11, 11], [12, 10, 12], [12, 10, 11], [12, 10, 12], [12, 11, 11],
    [12, 10, 11], [11, 9, 11], [12, 10, 11], [11, 10, 11], [12, 10, 11], [12, 10, 11], [11, 10, 11], [12, 10, 11], [11, 10, 10], [10, 9, 9],
    [10, 9, 9], [10, 9, 9], [11, 9, 9], [10, 9, 9], [10, 9, 10], [10, 8, 9], [10, 8, 9], [9, 8, 9], [8, 7, 8], [9, 7, 8],
    [9, 8, 8], [9, 8, 8], [9, 8, 8], [13, 8, 12], [14, 10, 12], [13, 10, 12], [13, 11, 12], [14, 11, 13], [13, 12, 12], [13, 11, 13],
    [13, 12, 12], [12, 11, 11], [12, 10, 11], [12, 10, 11], [12, 10, 12], [12, 10, 11], [12, 10, 11], [11, 10, 11], [14, 11, 13], [13, 12, 12],
    [13, 12, 12], [13, 11, 11], [12, 11, 12], [14, 11, 12], [13, 11, 12], [13, 12, 12], [12, 11, 12], [13, 11, 12], [12, 11, 12], [12, 11, 12],
    [12, 11, 12], [12, 11, 11], [12, 10, 11], [12, 10, 12], [14, 10, 12], [12, 10, 12], [13, 11, 12], [13, 11, 12], [13, 12, 13], [14, 12, 12],
    [13, 12, 12], [12, 11, 12], [13, 11, 12], [13, 11, 12], [12, 11, 12], [12, 10, 11], [12, 10, 11], [12, 10, 11], [12, 10, 12], [12, 10, 12],
    [12, 10, 11], [11, 9, 11], [12, 10, 12], [12, 11, 12], [14, 11, 12], [13, 12, 12], [13, 12, 12], [14, 12, 13], [21, 13, 19], [23, 17, 19],
    [21, 17, 19], [20, 17, 18], [19, 16, 18], [26, 17, 21], [22, 19, 20], [22, 20, 21], [23, 20, 22], [21, 19, 20], [22, 17, 20], [22, 19, 20],
    [22, 20, 21], [25, 20, 23], [28, 22, 25], [32, 24, 31], [37, 30, 36], [45, 34, 42], [50, 42, 50], [50, 38, 46], [47, 39, 42], [47, 41, 43],
    [45, 40, 44], [48, 41, 44], [47, 43, 45], [46, 41, 44], [47, 43, 44], [45, 40, 42], [46, 42, 45], [67, 44, 66],
  ],
  orange: [[8, 107], [75, 108], [240, 116], [400, 123], [560, 128], [700, 132], [850, 135], [1020, 134], [1060, 129], [1124, 122]],
  gray: [[8, 161], [150, 168], [330, 178], [450, 186], [600, 187], [760, 190], [870, 192], [950, 187], [1020, 178], [1060, 162], [1100, 145], [1124, 137]],
  red: [[8, 197], [80, 206], [160, 204], [240, 205], [320, 212], [380, 218], [430, 225], [480, 215], [560, 211], [640, 206], [780, 203], [890, 203], [910, 193], [950, 176], [1000, 155], [1018, 137], [1040, 92], [1080, 38], [1113, 0], [1124, -27]],
  blue: [[8, 197], [70, 216], [160, 204], [220, 206], [300, 212], [350, 222], [430, 237], [445, 230], [490, 205], [560, 206], [600, 201], [660, 203], [740, 199], [840, 208], [885, 200], [900, 180], [950, 142], [970, 130], [990, 120], [1004, 105], [1020, 65], [1034, 0], [1045, -45], [1057, -78], [1075, -93], [1107, -107], [1123, -141]],
  volume: [
    [44, 634], [93, 634], [442, 630], [450, 633], [458, 633], [466, 633], [563, 627], [612, 634], [660, 634], [693, 618], [701, 627],
    [709, 627], [717, 634], [742, 634], [782, 634], [831, 624], [839, 609], [880, 632], [888, 531], [905, 603], [913, 603], [921, 615],
    [929, 573], [937, 627], [953, 597], [961, 609], [970, 615], [986, 627], [994, 612], [1002, 618], [1010, 597], [1018, 531],
    [1026, 489], [1034, 522], [1042, 540], [1059, 570], [1075, 555], [1083, 600], [1108, 588], [1116, 561], [1124, 390],
  ],
  volumeBase: 638,
  average: [[8, 637], [660, 637], [680, 634], [850, 633], [890, 628], [940, 622], [1020, 618], [1040, 606], [1080, 596], [1110, 590], [1124, 583]],
  priceTicks: [[43, "0.70"], [79, "0.60"], [116, "0.50"], [152, "0.40"], [188, "0.30"], [224, "0.20"], [260, "0.10"]],
  minor: [61, 98, 134, 170, 206, 242, 278],
  marker: 58,
  volumeTicks: [[37, "20,000,000.00"], [111, "0.00"]],
  volumeMinor: [74],
  dates: [
    [20, "九月"], [157, "2013"], [222, "三月"], [336, "六月"], [442, "九月"], [580, "2014"], [653, "三月"], [759, "六月"],
    [857, "十月"], [946, "2015"], [1019, "三月"], [1125, "六月"], [1231, "九月"], [1369, ""],
  ],
  dateTicks: [],
};

const day: ChartData = {
  period: "Day",
  values: ["0.48", "0.44", "0.19", "0.29"],
  volumeValues: ["19,678,120.00", "1,917,407.18"],
  px: rightX,
  py: (y) => y / 3 - 24,
  vy: (y) => y / 3 - 311,
  price: (v) => 279 - 3.95 * (v - 10),
  bars: [
    [13, 12, 12], [13, 12, 12], [13, 12, 12], [13, 12, 12], [14, 12, 12], [17, 12, 17], [20, 17, 19], [21, 18, 20], [21, 18, 20], [21, 19, 20],
    [23, 20, 20], [21, 19, 20], [21, 18, 19], [20, 17, 18], [19, 18, 18], [19, 18, 18], [18, 17, 17], [19, 17, 18], [18, 17, 18], [20, 18, 20],
    [20, 18, 19], [20, 18, 18], [18, 17, 17], [18, 17, 17], [18, 16, 17], [19, 17, 19], [19, 18, 18], [19, 18, 19], [22, 18, 22], [22, 20, 21],
    [26, 20, 24], [25, 21, 22], [22, 20, 21], [22, 20, 21], [22, 20, 20], [21, 19, 20], [21, 20, 21], [22, 20, 21], [22, 20, 22], [22, 20, 21],
    [21, 20, 21], [23, 21, 22], [22, 20, 22], [23, 21, 22], [22, 20, 21], [22, 20, 21], [22, 19, 21], [21, 19, 19], [20, 19, 20], [20, 19, 20],
    [20, 19, 20], [20, 17, 20], [21, 20, 21], [22, 20, 22], [23, 21, 22], [23, 21, 22], [23, 21, 22], [23, 21, 22], [22, 21, 21], [22, 21, 22],
    [22, 20, 20], [22, 20, 21], [21, 20, 20], [21, 20, 21], [23, 21, 21], [23, 21, 22], [23, 21, 22], [24, 21, 24], [25, 23, 24], [24, 23, 24],
    [28, 24, 26], [26, 24, 25], [27, 25, 25], [26, 25, 25], [30, 25, 29], [31, 28, 29], [31, 29, 31], [34, 30, 31], [32, 31, 31], [32, 31, 32],
    [33, 31, 32], [37, 32, 37], [40, 36, 39], [43, 38, 41], [41, 38, 38], [46, 38, 43], [44, 42, 43], [47, 42, 47], [51, 46, 47], [49, 46, 48],
    [51, 47, 50], [51, 46, 50], [50, 46, 48], [50, 46, 49], [49, 38, 43], [44, 41, 41], [42, 41, 41], [47, 41, 46], [46, 43, 45], [44, 40, 41],
    [42, 38, 41], [45, 41, 44], [45, 43, 44], [44, 43, 44], [44, 41, 42], [43, 41, 42], [43, 41, 41], [43, 41, 41], [47, 41, 44], [45, 42, 44],
    [45, 43, 44], [47, 43, 44], [44, 43, 44], [45, 42, 43], [44, 42, 43], [44, 42, 43], [45, 43, 44], [44, 43, 44], [50, 43, 47], [48, 45, 47],
    [47, 43, 44], [45, 43, 44], [45, 42, 44], [44, 43, 44], [44, 43, 44], [44, 43, 43], [45, 42, 44], [44, 41, 42], [43, 40, 42], [43, 41, 42],
    [43, 41, 42], [44, 42, 44], [46, 43, 43], [44, 43, 44], [44, 43, 43], [46, 43, 46], [47, 44, 46], [67, 46, 66],
  ],
  orange: [[8, 885], [150, 882], [300, 875], [500, 869], [660, 860], [820, 839], [960, 822], [1126, 803]],
  gray: [[8, 890], [110, 882], [230, 873], [330, 860], [430, 853], [600, 838], [660, 827], [720, 805], [760, 785], [840, 762], [940, 735], [1020, 711], [1126, 686]],
  red: [[8, 883], [50, 880], [75, 870], [105, 853], [180, 836], [230, 832], [280, 813], [370, 795], [450, 793], [520, 785], [560, 781], [610, 766], [640, 745], [670, 727], [700, 697], [740, 640], [768, 606], [790, 600], [820, 583], [860, 569], [890, 564], [940, 548], [1000, 530], [1050, 523], [1110, 520], [1124, 508]],
  blue: [[8, 882], [48, 876], [90, 828], [105, 815], [200, 818], [235, 812], [260, 790], [320, 782], [360, 775], [420, 790], [470, 773], [520, 779], [560, 771], [605, 748], [620, 728], [660, 690], [690, 630], [720, 575], [750, 518], [768, 496], [785, 509], [830, 518], [880, 524], [910, 516], [960, 514], [975, 503], [1040, 505], [1070, 516], [1110, 508], [1116, 500], [1124, 466]],
  volume: [
    [18, 1268], [50, 1224], [58, 1233], [75, 1257], [83, 1248], [91, 1242], [107, 1258], [115, 1254], ...run(123, 166, 8.133, 1262),
    [180, 1262], [213, 1262], [221, 1265], [229, 1265], [237, 1254], [245, 1262], [253, 1239], [262, 1255], [270, 1258], [286, 1262],
    [302, 1265], [310, 1262], [327, 1266], [335, 1266], [343, 1239], [351, 1262], [359, 1262], [376, 1264], [384, 1264], [392, 1254],
    [408, 1262], [416, 1262], [424, 1251], [432, 1260], [441, 1264], [465, 1262], [473, 1266], [498, 1266], [506, 1266], [530, 1260],
    [555, 1257], [579, 1257], [587, 1263], [612, 1254], [628, 1257], [653, 1254], [669, 1212], [677, 1230], [685, 1236], [693, 1245],
    [701, 1209], [709, 1250], [717, 1236], [733, 1254], [741, 1242], [758, 1248], [766, 1254], [774, 1224], [782, 1248], [799, 1251],
    [807, 1260], [815, 1245], [831, 1239], [856, 1245], [872, 1245], [888, 1218], [921, 1257], [945, 1257], [970, 1221], [978, 1245],
    [986, 1251], [1042, 1257], [1059, 1263], [1075, 1251], [1083, 1233], [1108, 1236], [1124, 1020],
  ],
  volumeBase: 1271,
  average: [[8, 1268], [60, 1262], [240, 1262], [270, 1258], [330, 1258], [335, 1261], [510, 1262], [560, 1265], [650, 1264], [700, 1256], [780, 1252], [850, 1247], [900, 1244], [1000, 1247], [1060, 1251], [1115, 1251], [1124, 1245]],
  priceTicks: [[42, "0.70"], [82, "0.60"], [121, "0.50"], [161, "0.40"], [200, "0.30"], [239, "0.20"], [279, "0.10"]],
  minor: [62, 101, 141, 180, 220, 259],
  marker: 58,
  volumeTicks: [[27, "20,000,000.00"], [112, "0.00"]],
  volumeMinor: [69],
  dates: [[157, "十二月"], [328, "2015"], [491, "二月"], [637, "三月"], [816, "四月"], [962, "五月"], [1117, "六月"]],
  dateTicks: [1360],
};

function Combo({ label, value, wide }: { label: string; value: string; wide?: boolean }) {
  return (
    <div
      className={
        wide
          ? "flex h-[18px] w-[141px] shrink-0 items-center border border-t-[#404040] border-l-[#404040] border-r-white border-b-white bg-white"
          : "flex h-[18px] w-[131px] shrink-0 items-center border border-t-[#404040] border-l-[#404040] border-r-white border-b-white bg-white"
      }
    >
      <select aria-label={label} className="h-4 min-w-0 flex-1 appearance-none bg-white pl-0.5 text-xs leading-4 outline-none">
        <option>{value}</option>
      </select>
      <span className="pointer-events-none flex h-4 w-[15px] shrink-0 items-center justify-center border border-t-white border-l-white border-r-[#404040] border-b-[#404040] bg-[#d4d0c8]">
        <Arrow />
      </span>
    </div>
  );
}

function Tab({ name, current }: { name: string; current?: boolean }) {
  return (
    <button
      className={
        current
          ? "-ml-3 h-[15px] bg-[#404040] [clip-path:polygon(0_0,100%_0,calc(100%-8px)_100%,8px_100%)]"
          : "-ml-2 h-[14px] bg-[#606060] [clip-path:polygon(0_0,100%_0,calc(100%-6px)_100%,6px_100%)]"
      }
    >
      <span
        className={
          current
            ? "block h-[14px] bg-white px-3 text-xs leading-[14px] font-bold [clip-path:polygon(0_0,calc(100%-1px)_0,calc(100%-8px)_100%,8px_100%)]"
            : "block h-[13px] bg-gradient-to-b from-white to-[#c8c8c8] px-3 text-xs leading-[13px] [clip-path:polygon(0_0,calc(100%-1px)_0,calc(100%-6px)_100%,6px_100%)]"
        }
      >
        {name}
      </span>
    </button>
  );
}

function StatusCell({ children, className }: { children?: React.ReactNode; className: string }) {
  return (
    <div className={`ml-0.5 h-[18px] border border-t-[#808080] border-l-[#808080] border-r-white border-b-white ${className}`}>
      {children}
    </div>
  );
}

export default function App() {
  return (
    <div className="min-h-screen bg-white font-['Liberation_Sans','Noto_Sans_CJK_TC',sans-serif] text-black">
      <div className="flex bg-[#1b1d1b]">
        <div className="mr-1 min-w-0 flex-1 overflow-hidden border-b border-[#404040] bg-[#d4d0c8] font-['Liberation_Serif','Noto_Sans_CJK_TC',serif]">
          <header className="flex h-[18px] items-center bg-gradient-to-r from-[#0a246a] to-[#a6caf0] px-0.5 text-white">
            <svg viewBox="0 0 16 16" className="h-4 w-4" fill="none" strokeWidth="3.500">
              <path d="M8 2a6 6 0 00-6 6" stroke="#4caf3a" />
              <path d="M2 8a6 6 0 004 5.500" stroke="#2f8fd8" />
              <path d="M7 14a6 6 0 006-3" stroke="#38b8c8" />
              <path d="M9 2a6 6 0 014 3" stroke="#f0a020" />
              <path d="M13 6a6 6 0 01.5 4" stroke="#e05a28" />
            </svg>
            <h1 className="ml-0.5 flex-1 truncate text-[15px] leading-4 font-bold">MultiCharts64 - Untitled Desktop - MS1188HK</h1>
            <FrameButton kind="min" />
            <FrameButton kind="restore" />
            <div className="ml-0.5">
              <FrameButton kind="close" />
            </div>
          </header>

          <nav className="flex h-[23px] items-center text-xs">
            <Grip />
            {["File", "View", "Insert", "Format", "Window", "Help"].map((item) => (
              <button key={item} className="px-[7px]">
                {item}
              </button>
            ))}
          </nav>

          <div className="flex h-7 items-center border-t border-b border-[#808080] pt-0.5 shadow-[inset_0_1px_0_#fff]">
            <Grip />
            <Tools
              items={[
                "New Workspace", "Open", "v", "Save", "Close Workspace", "|", "Insert Chart", "Insert Scanner", "Insert Bar",
                "Insert Formula", "Insert Signal", "Insert Portfolio", "Order Tracker", "Insert Table",
              ]}
            />
            <div className="w-[5px]" />
            <BandEnd />
            <Grip />
            <Tools
              items={[
                "Add Instrument", "Add Study", "Add Strategy", "Add Drawing", "V", "|", "Format Objects", "|", "Format Window", "|",
                "Bar", "Candle", "Hollow Candle", "Line", "|", "HLC", "Kagi", "Renko", "Point and Figure", "Heikin Ashi", "Line Break",
                "Volume Profile", "|", "Pointer", "Cross Cursor", "|", "Hint Window", "Status Line", "Text Status", "|", "Data Window",
                "Chart Trading", "Look Inside",
              ]}
            />
            <div className="w-[7px]" />
            <BandEnd />
            <Grip />
            <Tools
              items={[
                "Compress Width", "Expand Width", "Compress Height", "Expand Height", "Shift Up", "Shift Down", "Shift Left",
                "Shift Right", "More Bars", "Fewer Bars", "Zoom In", "Zoom Out", "Undo Zoom", "Reset X", "Reset Y", "Cancel Zoom", "Hand",
              ]}
            />
          </div>

          <main className="grid grid-cols-2 border-2 border-t-[#404040] border-r-[#d4d0c8] border-b-white border-l-[#404040] font-['Liberation_Sans','Noto_Sans_CJK_TC',sans-serif]">
            <ChartWindow data={quarter} />
            <ChartWindow data={week} />
            <ChartWindow data={month} />
            <ChartWindow data={day} />
          </main>

          <div className="flex h-4 border-t border-[#404040] bg-gradient-to-r from-[#808080] to-[#d4d0c8]">
            <div className="flex w-16 items-center justify-around bg-[#d4d0c8]">
              {["M3 1v8M8 1v8L4 5z", "M7 1v8L3 5z", "M3 1v8l4-4z", "M7 1v8M2 1v8l4-4z"].map((d) => (
                <button key={d} aria-label="Scroll tabs">
                  <svg viewBox="0 0 10 10" className="h-2.5 w-2.5">
                    <path d={d} fill="#707070" stroke="#707070" />
                  </svg>
                </button>
              ))}
            </div>
            <div className="ml-2.5 flex">
              <Tab name="MS0001HK" />
              <Tab name="MS0197HK" />
              <Tab name="MS1188HK" current />
            </div>
          </div>

          <div className="flex h-7 items-center text-xs">
            <Grip />
            <Tools
              items={[
                "Trend Line", "Horizontal Line", "Vertical Line", "Regression", "Equidistant", "Pitchfork", "|", "Fibonacci Levels",
                "Speed Lines", "Elliott", "Arcs", "Time Zones", "Trend Time", "|", "Gann Fan", "Gann Square", "|", "Label", "Text",
                "Rectangle", "Ellipse", "Arc", "Arrow Down", "Arrow Up", "|", "Magnet", "Lock Drawings",
              ]}
            />
            <div className="w-[5px]" />
            <BandEnd />
            <Grip />
            <Tools
              items={[
                "Tick", "v", "Volume", "v", "Range", "v", "Seconds", "v", "Minutes", "v", "Hours", "v", "Days", "v", "Weeks", "Months",
                "Quarters", "Years",
              ]}
            />
            <div className="w-[7px]" />
            <BandEnd />
            <Grip />
            <Combo label="Symbol" value="Type a symbol/interval" />
            <div className="w-1" />
            <Tools items={["Go"]} />
            <div className="w-1.5" />
            <BandEnd />
            <Grip />
            <Combo label="Resolution" value="As is (1 Quarter)" />
            <Separator />
            <Combo label="Date" value="" wide />
            <div className="w-0.5" />
            <Tools items={["Playback Settings", "|"]} />
            <button className="flex items-center gap-0.5 px-1">
              <Icon name="Jump" />
              Jump
            </button>
            <div className="w-1" />
            <Tools items={["|", "Step Back", "d", "Play", "Step Forward", "d", "To End", "|"]} />
            <div className="relative mx-2 flex h-5 w-[88px] shrink-0 items-center">
              <div className="h-[3px] w-full border border-t-[#808080] border-l-[#404040] border-r-white border-b-white bg-[#404040]" />
              <input
                type="range"
                aria-label="Playback speed"
                defaultValue={25}
                className="absolute inset-0 w-full appearance-none bg-transparent [&::-webkit-slider-thumb]:h-[15px] [&::-webkit-slider-thumb]:w-[7px] [&::-webkit-slider-thumb]:appearance-none [&::-webkit-slider-thumb]:border [&::-webkit-slider-thumb]:border-t-white [&::-webkit-slider-thumb]:border-l-white [&::-webkit-slider-thumb]:border-r-[#404040] [&::-webkit-slider-thumb]:border-b-[#404040] [&::-webkit-slider-thumb]:bg-[#d4d0c8]"
              />
            </div>
            <Separator />
            <button disabled className="flex items-center gap-1 px-1 text-[#808080] [text-shadow:1px_1px_0_#fff]">
              <Icon name="Global Mode" />
              Global Mode
            </button>
          </div>

          <footer className="mb-1 flex h-[18px] pr-3 text-[13px] leading-4">
            <StatusCell className="-ml-px flex-1">Ready</StatusCell>
            <StatusCell className="w-[77px]" />
            <StatusCell className="w-[77px]" />
            <StatusCell className="w-[58px]">20:01:57</StatusCell>
            <StatusCell className="flex w-[22px] items-center justify-center">
              <span className="h-3 w-3.5 rounded border border-[#1c5c1c] bg-gradient-to-b from-[#6ad86a] to-[#1a8c1a]" />
            </StatusCell>
          </footer>
        </div>
      </div>
    </div>
  );
}
